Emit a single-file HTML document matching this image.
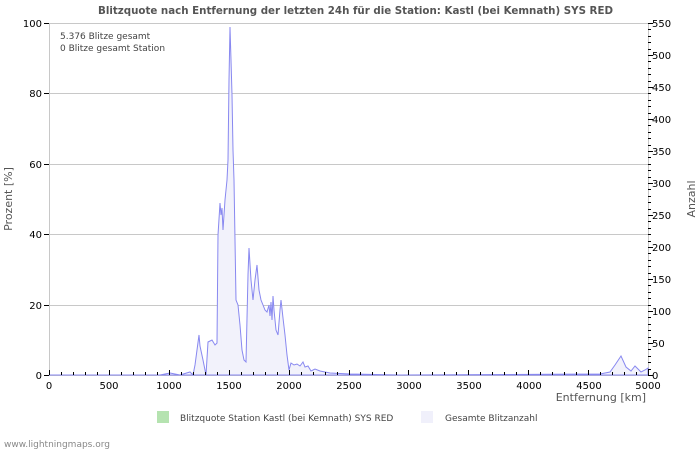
<!DOCTYPE html>
<html><head><meta charset="utf-8"><style>
body{margin:0;background:#fff;width:700px;height:450px;overflow:hidden}
svg{display:block;font-family:"DejaVu Sans","Liberation Sans",sans-serif}
</style></head><body>
<svg width="700" height="450" viewBox="0 0 700 450">
<text x="98" y="14" font-size="11" font-weight="bold" fill="#555" textLength="515" lengthAdjust="spacingAndGlyphs">Blitzquote nach Entfernung der letzten 24h für die Station: Kastl (bei Kemnath) SYS RED</text>
<g stroke="#c8c8c8" stroke-width="1">
<line x1="49" y1="23.5" x2="648" y2="23.5"/>
<line x1="49" y1="93.5" x2="648" y2="93.5"/>
<line x1="49" y1="164.5" x2="648" y2="164.5"/>
<line x1="49" y1="234.5" x2="648" y2="234.5"/>
<line x1="49" y1="305.5" x2="648" y2="305.5"/>
<line x1="49.5" y1="23" x2="49.5" y2="375"/>
<line x1="648.5" y1="23" x2="648.5" y2="375"/>
<line x1="49" y1="375.5" x2="648" y2="375.5"/>
</g>
<polygon fill="#f2f2fb" stroke="#8888f0" stroke-width="1" points="49,375 160,375 170,373 180,375 190,372 193,375 195,365 199,335 200,346 203,360 206,375 208,342 212,340 215,345 217,343 218,235 220,203 221,215 222,208 223,230 225,200 227,180 228,160 229,80 230,27 231,60 232,95 233,150 234,180 236,300 238,305 240,325 242,350 244,360 246,362 248,275 249,248 251,280 253,300 255,280 257,265 259,290 261,300 263,305 265,310 267,312 269,305 270,316 271,302 272,320 273,296 274,310 276,330 278,335 280,310 281,300 283,318 285,335 287,355 289,370 291,363 294,365 297,364 300,366 303,362 305,367 308,366 311,371 315,369 320,371 330,373 350,374 400,375 600,374 610,372 615,365 621,356 626,367 631,371 635,366 638,369 641,372 645,370 648,368 648,375"/>
<g stroke="#000" stroke-width="1">
<line x1="44" y1="23.5" x2="49" y2="23.5"/><line x1="44" y1="93.5" x2="49" y2="93.5"/><line x1="44" y1="164.5" x2="49" y2="164.5"/><line x1="44" y1="234.5" x2="49" y2="234.5"/><line x1="44" y1="305.5" x2="49" y2="305.5"/><line x1="44" y1="375.5" x2="49" y2="375.5"/>
</g>
<g font-size="10" fill="#000" text-anchor="end">
<text x="42" y="27">100</text><text x="42" y="97">80</text><text x="42" y="168">60</text><text x="42" y="238">40</text><text x="42" y="309">20</text><text x="42" y="379">0</text>
</g>
<g font-size="10" fill="#000">
<text x="652" y="27">550</text><text x="652" y="59">500</text><text x="652" y="91">450</text><text x="652" y="123">400</text><text x="652" y="155">350</text><text x="652" y="187">300</text><text x="652" y="219">250</text><text x="652" y="251">200</text><text x="652" y="283">150</text><text x="652" y="315">100</text><text x="652" y="347">50</text><text x="652" y="379">0</text>
</g>
<g font-size="10" fill="#000" text-anchor="middle">
<text x="49" y="389">0</text><text x="109" y="389">500</text><text x="169" y="389">1000</text><text x="229" y="389">1500</text><text x="289" y="389">2000</text><text x="349" y="389">2500</text><text x="409" y="389">3000</text><text x="469" y="389">3500</text><text x="529" y="389">4000</text><text x="589" y="389">4500</text><text x="648" y="389">5000</text>
</g>
<text x="60" y="39" font-size="9" fill="#444">5.376 Blitze gesamt</text>
<text x="60" y="51" font-size="9" fill="#444">0 Blitze gesamt Station</text>
<text x="646" y="401" font-size="11" fill="#555" text-anchor="end">Entfernung   [km]</text>
<text transform="translate(12,199) rotate(-90)" font-size="11" fill="#555" text-anchor="middle">Prozent   [%]</text>
<text transform="translate(695,199) rotate(-90)" font-size="11" fill="#555" text-anchor="middle">Anzahl</text>
<rect x="157" y="411" width="12" height="12" fill="#b5e3b0"/>
<text x="180" y="421" font-size="9" fill="#444">Blitzquote Station Kastl (bei Kemnath) SYS RED</text>
<rect x="421" y="411" width="12" height="12" fill="#f0f0fb"/>
<text x="445" y="421" font-size="9" fill="#444">Gesamte Blitzanzahl</text>
<text x="4" y="447" font-size="9" fill="#888">www.lightningmaps.org</text>
</svg>
<script>
var ns='http://www.w3.org/2000/svg',svg=document.querySelector('svg');
for(var i=0;i<=55;i++){var y=375-i*6.4;var l=document.createElementNS(ns,'line');l.setAttribute('x1',648);l.setAttribute('x2',i%5?651:653);l.setAttribute('y1',Math.round(y)+.5);l.setAttribute('y2',Math.round(y)+.5);l.setAttribute('stroke','#000');svg.appendChild(l);}
for(var i=0;i<=50;i++){var x=49+i*11.98;var l=document.createElementNS(ns,'line');l.setAttribute('x1',Math.round(x)+.5);l.setAttribute('x2',Math.round(x)+.5);l.setAttribute('y1',375);l.setAttribute('y2',i%5?372:370);l.setAttribute('stroke','#000');svg.appendChild(l);}
</script>
</body></html>
